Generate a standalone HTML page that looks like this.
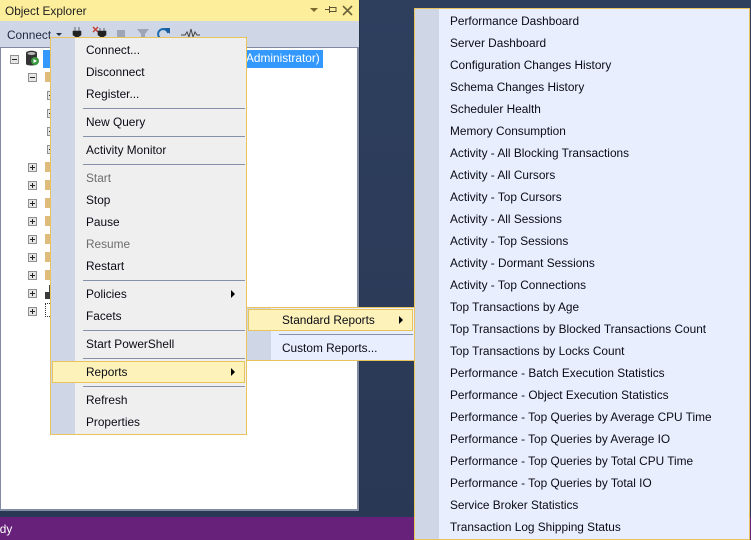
<!DOCTYPE html>
<html><head><meta charset="utf-8"><style>
html,body{margin:0;padding:0}
body{width:751px;height:540px;overflow:hidden;position:relative;background:linear-gradient(#2e3f5e,#293854);font-family:"Liberation Sans",sans-serif;font-size:11.85px;color:#1a1a1a}
div{position:absolute;box-sizing:border-box}
.t{white-space:nowrap;line-height:22px;height:22px;color:#0a0a14}
.d{color:#6d6d6d}
.s{height:1px;background:#8591a8}
.e{width:9px;height:9px;border:1px solid #909090;background:#e6e6e6;left:28px}
.e:before{content:"";position:absolute;left:1px;top:3px;width:5px;height:1px;background:#222}
.p:after{content:"";position:absolute;left:3px;top:1px;width:1px;height:5px;background:#222}
.f{left:45px;width:5px;height:10px;background:#e0bc7c}
.a{width:0;height:0;border-left:4px solid #000;border-top:4px solid transparent;border-bottom:4px solid transparent}
</style></head><body>
<div style="left:358px;top:0;width:2px;height:512px;background:#24324c"></div>
<div style="left:0;top:0;width:359px;height:21px;background:#fdee9c"></div>
<div class="t" style="left:5px;top:0;color:#1e1e1e">Object Explorer</div>
<svg style="position:absolute;left:305px;top:1px" width="50" height="18"><path d="M5 7h8l-4 4z" fill="#7a6a2e"/><path d="M20 8.500h4M24.500 5v7M24.500 6.500h6.500v4h-6.500" stroke="#5a5230" fill="none"/><path d="M38 5l9 9M47 5l-9 9" stroke="#6a6338" stroke-width="1.6"/></svg>
<div style="left:0;top:21px;width:359px;height:27px;background:#cfd6e5"></div>
<div class="t" style="left:7px;top:24px;color:#1e2a44">Connect</div>
<svg style="position:absolute;left:54px;top:24px" width="146" height="24"><path d="M2 9h6l-3 3z" fill="#1e2a44"/><path d="M21 3v4M25 3v4M19 7h8v4l-3 2v5h-2v-5l-3-2z" fill="#222" stroke="#222" stroke-width=".6"/><path d="M39 3l5 5M44 3l-5 5" stroke="#c3372c" stroke-width="1.3"/><path d="M46 4v3M50 4v3M44 7h8v4l-3 2v5h-2v-5l-3-2z" fill="#222" stroke="#222" stroke-width=".6"/><rect x="63" y="6" width="8" height="8" fill="#9ea6b6"/><path d="M83 5h12l-4 5v6h-4v-6z" fill="#9ea6b6"/><path d="M106 14a5 5 0 1 1 8-5" fill="none" stroke="#1c6bb0" stroke-width="2"/><path d="M110 4l6 0 0 6z" fill="#1c5f9f"/><path d="M127 11h4l2-3 2 5 2-8 2 8 2-5 2 3h3" fill="none" stroke="#444" stroke-width="1"/></svg>
<div style="left:0;top:47px;width:359px;height:464px;background:#fff;border:1px solid #818ca2;border-width:1px 2px 2px 1px"></div>
<div class="e" style="left:10px;top:55px"></div>
<svg style="position:absolute;left:24px;top:50px" width="18" height="18"><path d="M2 3c0-3 11-3 11 0v11c0 2-11 2-11 0z" fill="#333"/><ellipse cx="7.500" cy="3.500" rx="4" ry="1.500" fill="#bbb"/><circle cx="11" cy="11" r="4" fill="#3b9a3e"/><path d="M9.500 9l3.500 2-3.500 2z" fill="#fff"/></svg>
<div style="left:43px;top:50px;width:280px;height:18px;background:#3399ff"></div>
<div style="left:246px;top:50px;line-height:17px;color:#fff;white-space:nowrap">Administrator)</div>
<div class="e" style="left:28px;top:73px"></div><div class="f" style="top:72px"></div>
<div class="e" style="left:47px;top:91px"></div><div class="e" style="left:47px;top:109px"></div><div class="e" style="left:47px;top:127px"></div><div class="e" style="left:47px;top:145px"></div>
<div class="e p" style="top:163px"></div><div class="f" style="top:162px"></div>
<div class="e p" style="top:181px"></div><div class="f" style="top:180px"></div>
<div class="e p" style="top:199px"></div><div class="f" style="top:198px"></div>
<div class="e p" style="top:217px"></div><div class="f" style="top:216px"></div>
<div class="e p" style="top:235px"></div><div class="f" style="top:234px"></div>
<div class="e p" style="top:253px"></div><div class="f" style="top:252px"></div>
<div class="e p" style="top:271px"></div><div class="f" style="top:270px"></div>
<div class="e p" style="top:289px"></div><div style="left:49px;top:285px;width:1px;height:7px;background:#444"></div><div style="left:45px;top:292px;width:5px;height:7px;background:#3a3a3a"></div>
<div class="e p" style="top:307px"></div><div style="left:45px;top:303px;width:5px;height:14px;border:1px dotted #333;border-right:0"></div>
<div style="left:0;top:517px;width:751px;height:23px;background:#68217a"></div>
<div class="t" style="left:-22px;top:518px;color:#fff">Ready</div>

<div style="left:50px;top:37px;width:197px;height:398px;background:#efeff0;border:1px solid #e8c35e"></div>
<div style="left:51px;top:38px;width:24px;height:396px;background:#cfd6e5"></div>
<div class="t" style="left:86px;top:39px">Connect...</div>
<div class="t" style="left:86px;top:61px">Disconnect</div>
<div class="t" style="left:86px;top:83px">Register...</div>
<div class="s" style="left:83px;top:108px;width:162px"></div>
<div class="t" style="left:86px;top:111px">New Query</div>
<div class="s" style="left:83px;top:136px;width:162px"></div>
<div class="t" style="left:86px;top:139px">Activity Monitor</div>
<div class="s" style="left:83px;top:164px;width:162px"></div>
<div class="t d" style="left:86px;top:167px">Start</div>
<div class="t" style="left:86px;top:189px">Stop</div>
<div class="t" style="left:86px;top:211px">Pause</div>
<div class="t d" style="left:86px;top:233px">Resume</div>
<div class="t" style="left:86px;top:255px">Restart</div>
<div class="s" style="left:83px;top:280px;width:162px"></div>
<div class="t" style="left:86px;top:283px">Policies</div><div class="a" style="left:231px;top:290px"></div>
<div class="t" style="left:86px;top:305px">Facets</div>
<div class="s" style="left:83px;top:330px;width:162px"></div>
<div class="t" style="left:86px;top:333px">Start PowerShell</div>
<div class="s" style="left:83px;top:358px;width:162px"></div>
<div style="left:52px;top:361px;width:193px;height:22px;background:#fdf3ba;border:1px solid #e8c35e"></div>
<div class="t" style="left:86px;top:361px">Reports</div><div class="a" style="left:231px;top:368px"></div>
<div class="s" style="left:83px;top:386px;width:162px"></div>
<div class="t" style="left:86px;top:389px">Refresh</div>
<div class="t" style="left:86px;top:411px">Properties</div>

<div style="left:247px;top:307px;width:168px;height:54px;background:#e9eeff;border:1px solid #e8c35e;border-left:0"></div>
<div style="left:247px;top:308px;width:24px;height:52px;background:#cfd6e5"></div>
<div style="left:248px;top:309px;width:165px;height:22px;background:#fdf3ba;border:1px solid #e8c35e"></div>
<div class="t" style="left:282px;top:309px">Standard Reports</div><div class="a" style="left:399px;top:316px"></div>
<div class="s" style="left:279px;top:334px;width:134px"></div>
<div class="t" style="left:282px;top:337px">Custom Reports...</div>

<div style="left:414px;top:8px;width:336px;height:532px;background:#e9eeff;border:1px solid #e8c35e"></div>
<div style="left:415px;top:9px;width:24px;height:530px;background:#cfd6e5"></div>
<div class="t" style="left:450px;top:10px">Performance Dashboard</div>
<div class="t" style="left:450px;top:32px">Server Dashboard</div>
<div class="t" style="left:450px;top:54px">Configuration Changes History</div>
<div class="t" style="left:450px;top:76px">Schema Changes History</div>
<div class="t" style="left:450px;top:98px">Scheduler Health</div>
<div class="t" style="left:450px;top:120px">Memory Consumption</div>
<div class="t" style="left:450px;top:142px">Activity - All Blocking Transactions</div>
<div class="t" style="left:450px;top:164px">Activity - All Cursors</div>
<div class="t" style="left:450px;top:186px">Activity - Top Cursors</div>
<div class="t" style="left:450px;top:208px">Activity - All Sessions</div>
<div class="t" style="left:450px;top:230px">Activity - Top Sessions</div>
<div class="t" style="left:450px;top:252px">Activity - Dormant Sessions</div>
<div class="t" style="left:450px;top:274px">Activity - Top Connections</div>
<div class="t" style="left:450px;top:296px">Top Transactions by Age</div>
<div class="t" style="left:450px;top:318px">Top Transactions by Blocked Transactions Count</div>
<div class="t" style="left:450px;top:340px">Top Transactions by Locks Count</div>
<div class="t" style="left:450px;top:362px">Performance - Batch Execution Statistics</div>
<div class="t" style="left:450px;top:384px">Performance - Object Execution Statistics</div>
<div class="t" style="left:450px;top:406px">Performance - Top Queries by Average CPU Time</div>
<div class="t" style="left:450px;top:428px">Performance - Top Queries by Average IO</div>
<div class="t" style="left:450px;top:450px">Performance - Top Queries by Total CPU Time</div>
<div class="t" style="left:450px;top:472px">Performance - Top Queries by Total IO</div>
<div class="t" style="left:450px;top:494px">Service Broker Statistics</div>
<div class="t" style="left:450px;top:516px">Transaction Log Shipping Status</div>
</body></html>
